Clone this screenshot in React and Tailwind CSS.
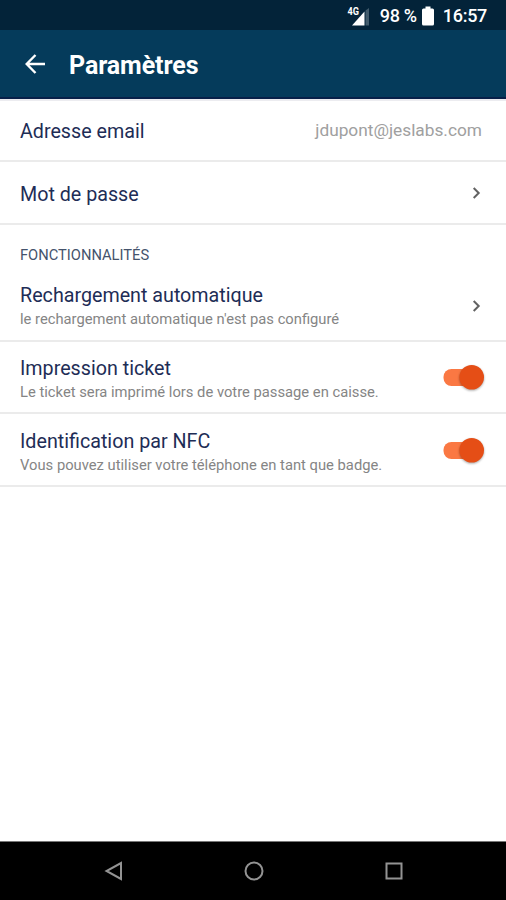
function Chevron() {
  return (
    <svg className="h-[14px] w-[10px] shrink-0" viewBox="0 0 10 14" fill="none">
      <path d="M1.7 2 L6.7 7 L1.7 12" stroke="#626262" strokeWidth="2" />
    </svg>
  );
}

function Switch() {
  return (
    <svg className="h-[30px] w-[44px] shrink-0" viewBox="0 0 44 30" overflow="visible">
      <rect x="2.5" y="7" width="34" height="17" rx="8" fill="#fa7843" />
      <circle cx="30.7" cy="15.3" r="12.3" fill="#e54e16" className="drop-shadow-[0_1px_1px_rgba(0,0,0,0.35)]" />
    </svg>
  );
}

function Row({ title, subtitle, className, textClassName, children }) {
  return (
    <div className={"flex items-center justify-between border-b-2 border-[#ebebeb] pl-5 " + className}>
      <div className={"whitespace-nowrap " + textClassName}>
        <div className="text-[19.7px] leading-6 text-[#1e2d56]">{title}</div>
        {subtitle && <div className="text-[14.75px] leading-[22px] text-[#858585]">{subtitle}</div>}
      </div>
      {children}
    </div>
  );
}

export default function App() {
  return (
    <div className="flex h-[900px] w-[506px] flex-col overflow-hidden bg-white font-['Roboto',sans-serif]">
      <div className="flex h-[30px] shrink-0 items-center justify-end bg-[#032339] pr-[19px] pt-px text-[18px] font-medium tracking-[-0.3px] text-white">
        <svg className="mr-[10px] h-[22px] w-[24px]" viewBox="0 0 24 22">
          <text x="1.5" y="10" fontSize="10" fontWeight="700" fill="#fff" letterSpacing="0" textLength="11.5" lengthAdjust="spacingAndGlyphs">4G</text>
          <path d="M6 20.5 L18.5 6.5 V20.5 Z" fill="#fff" />
          <path d="M19.5 5.5 L23 3 V20.5 H19.5 Z" fill="#415b6c" />
        </svg>
        <span className="whitespace-nowrap">98 %</span>
        <svg className="ml-[5px] mr-[9px] h-[20px] w-[12px]" viewBox="0 0 12 20">
          <path d="M3.5 0.5 H8.5 V2.5 H10.5 Q12 2.5 12 4 V18 Q12 19.5 10.5 19.5 H1.5 Q0 19.5 0 18 V4 Q0 2.5 1.5 2.5 H3.5 Z" fill="#fff" />
        </svg>
        <span>16:57</span>
      </div>
      <header className="flex h-[69px] shrink-0 items-center border-b-2 border-[#082049] bg-[#053b5b] pl-[25px]">
        <svg className="mt-px h-[20px] w-[20px]" viewBox="0 0 20 20" fill="none" stroke="#fff" strokeWidth="2.4">
          <path d="M20 10 H1.8 M10.5 1 L1.7 10 L10.5 19" />
        </svg>
        <h1 className="ml-[24px] pt-[5px] text-[25px] font-bold tracking-[-0.1px] text-white">Paramètres</h1>
      </header>
      <main className="flex flex-1 flex-col border-t-2 border-[#ececf0]">
        <Row title="Adresse email" className="h-[61px] pr-6" textClassName="pt-[3px]">
          <span className="pt-px text-[17.3px] text-[#a0a0a0]">jdupont@jeslabs.com</span>
        </Row>
        <Row title="Mot de passe" className="h-[63px] pr-[24px]" textClassName="pt-[4px]">
          <Chevron />
        </Row>
        <h2 className="h-[46px] pl-5 pt-[20px] text-[14.7px] leading-5 text-[#44536c]">FONCTIONNALITÉS</h2>
        <Row title="Rechargement automatique" subtitle="le rechargement automatique n'est pas configuré" className="h-[71px] pr-[24px]" textClassName="pt-[3px]">
          <Chevron />
        </Row>
        <Row title="Impression ticket" subtitle="Le ticket sera imprimé lors de votre passage en caisse." className="h-[72px] pr-[21px]" textClassName="pt-[5px]">
          <Switch />
        </Row>
        <Row title="Identification par NFC" subtitle="Vous pouvez utiliser votre téléphone en tant que badge." className="h-[73px] pr-[21px]" textClassName="pt-[6px]">
          <Switch />
        </Row>
      </main>
      <nav className="flex h-[59px] shrink-0 items-center justify-between border-t border-[#777] bg-black pl-[104px] pr-[102px]">
        <svg className="h-[20px] w-[20px]" viewBox="0 0 20 20" fill="none" stroke="#939393" strokeWidth="2">
          <path d="M17 2 V18 L2.5 10 Z" />
        </svg>
        <svg className="h-[20px] w-[20px]" viewBox="0 0 20 20" fill="none" stroke="#939393" strokeWidth="2">
          <circle cx="10" cy="10" r="8.5" />
        </svg>
        <svg className="h-[20px] w-[20px]" viewBox="0 0 20 20" fill="none" stroke="#939393" strokeWidth="2">
          <rect x="2.5" y="2.5" width="15" height="15" />
        </svg>
      </nav>
    </div>
  );
}
